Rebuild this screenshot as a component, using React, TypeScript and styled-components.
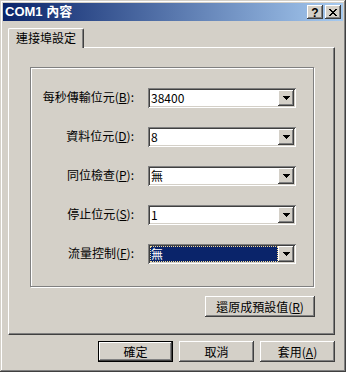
import React from "react";
import styled, { createGlobalStyle } from "styled-components";

const Global = createGlobalStyle`
  html, body { margin: 0; padding: 0; background: #d4d0c8; }
  body {
    font-family: "Noto Sans CJK TC", "Liberation Sans", sans-serif;
    font-size: 12px;
    color: #000;
  }
  * { box-sizing: border-box; }
`;

const Window = styled.div`
  width: 346px;
  height: 372px;
  padding: 3px;
  background: #d4d0c8;
  box-shadow: inset -1px -1px 0 #404040, inset 1px 1px 0 #d4d0c8,
    inset -2px -2px 0 #808080, inset 2px 2px 0 #ffffff;
  display: flex;
  flex-direction: column;
`;

const TitleBar = styled.div`
  height: 18px;
  display: flex;
  align-items: center;
  padding: 0 2px;
  background: linear-gradient(to right, #0a246a, #a6caf0);
`;

const Title = styled.span`
  flex: 1;
  color: #fff;
  font-family: "Liberation Sans", "Noto Sans CJK TC", sans-serif;
  font-weight: bold;
  font-size: 13px;
  line-height: 18px;
  white-space: nowrap;
`;

const CaptionButtons = styled.div`
  display: flex;
  gap: 2px;
`;

const CaptionButton = styled.div`
  width: 16px;
  height: 14px;
  background: #d4d0c8;
  box-shadow: inset -1px -1px 0 #404040, inset 1px 1px 0 #ffffff,
    inset -2px -2px 0 #808080;
  display: flex;
  align-items: center;
  justify-content: center;
`;

const HelpGlyph = styled.span`
  font-family: "Liberation Sans", sans-serif;
  font-weight: bold;
  font-size: 12px;
  line-height: 12px;
  margin-top: 1px;
`;

const Body = styled.div`
  display: flex;
  flex-direction: column;
  padding: 7px 0 0 5px;
`;

const TabStrip = styled.div`
  display: flex;
  height: 19px;
`;

const Tab = styled.div`
  position: relative;
  z-index: 1;
  width: 76px;
  height: 20px;
  margin-bottom: -1px;
  padding-left: 7px;
  background: #d4d0c8;
  border-left: 1px solid #ffffff;
  border-top: 1px solid #ffffff;
  border-right: 1px solid #404040;
  border-top-left-radius: 2px;
  border-top-right-radius: 2px;
  box-shadow: inset -1px 0 0 #808080;
  line-height: 18px;
  white-space: nowrap;
`;

const Panel = styled.div`
  width: 327px;
  height: 288px;
  background: #d4d0c8;
  border: 1px solid;
  border-color: #ffffff #404040 #404040 #ffffff;
  box-shadow: inset -1px -1px 0 #808080;
  display: flex;
  flex-direction: column;
  align-items: flex-start;
`;

const PanelContent = styled.div`
  margin: 19px 0 0 21px;
  width: 285px;
  display: flex;
  flex-direction: column;
  align-items: flex-end;
`;

const GroupBox = styled.div`
  width: 284px;
  height: 220px;
  margin-right: 1px;
  border: 1px solid #808080;
  box-shadow: inset 1px 1px 0 #ffffff, 1px 1px 0 #ffffff;
  display: grid;
  grid-template-columns: 103px 148px;
  grid-auto-rows: 20px;
  column-gap: 14px;
  row-gap: 19px;
  padding-top: 20px;
  align-content: start;
  align-items: center;
`;

const Label = styled.label`
  text-align: right;
  white-space: nowrap;
  line-height: 17px;
  padding-bottom: 3px;
`;

const Combo = styled.div`
  width: 148px;
  height: 20px;
  padding: 2px;
  display: flex;
  background: #ffffff;
  box-shadow: inset 1px 1px 0 #808080, inset -1px -1px 0 #ffffff,
    inset 2px 2px 0 #404040, inset -2px -2px 0 #d4d0c8;
`;

const Field = styled.div<{ $selected?: boolean }>`
  flex: 1;
  height: 16px;
  line-height: 16px;
  padding-left: 1px;
  white-space: nowrap;
  background: ${(p) => (p.$selected ? "#0a246a" : "#ffffff")};
  color: ${(p) => (p.$selected ? "#ffffff" : "#000000")};
  outline: ${(p) => (p.$selected ? "1px dotted #f5db95" : "none")};
  outline-offset: -1px;
`;

const DropButton = styled.div`
  width: 16px;
  height: 16px;
  background: #d4d0c8;
  box-shadow: inset -1px -1px 0 #404040, inset 1px 1px 0 #ffffff,
    inset -2px -2px 0 #808080;
  display: flex;
  align-items: center;
  justify-content: center;
`;

const Button = styled.button<{ $default?: boolean; $width?: number }>`
  width: ${(p) => p.$width ?? 75}px;
  height: 21px;
  padding: 0;
  margin: 0;
  border: none;
  background: #d4d0c8;
  color: #000;
  font-family: "Noto Sans CJK TC", "Liberation Sans", sans-serif;
  font-size: 12px;
  line-height: 17px;
  white-space: nowrap;
  box-shadow: ${(p) =>
    p.$default
      ? "inset 0 0 0 1px #000000, inset -2px -2px 0 #404040, inset 2px 2px 0 #ffffff, inset -3px -3px 0 #808080"
      : "inset -1px -1px 0 #404040, inset 1px 1px 0 #ffffff, inset -2px -2px 0 #808080"};
`;

const ResetButton = styled(Button)`
  margin-top: 9px;
`;

const ButtonRow = styled.div`
  width: 327px;
  margin-top: 6px;
  display: flex;
  justify-content: flex-end;
  gap: 6px;
`;

const Arrow = () => (
  <svg width="7" height="4" viewBox="0 0 7 4" shapeRendering="crispEdges">
    <path d="M0 0h7v1h-1v1h-1v1h-1v1h-1v-1h-1v-1h-1v-1h-1z" fill="#000" />
  </svg>
);

const closeRows = ["11000011", "01100110", "00111100", "00011000", "00111100", "01100110", "11000011"];

const CloseGlyph = () => (
  <svg width="8" height="7" viewBox="0 0 8 7" shapeRendering="crispEdges">
    {closeRows.flatMap((row, y) =>
      row.split("").map((c, x) =>
        c === "1" ? <rect key={`${x}-${y}`} x={x} y={y} width="1" height="1" fill="#000" /> : null
      )
    )}
  </svg>
);

const rows = [
  { label: "每秒傳輸位元", key: "B", value: "38400" },
  { label: "資料位元", key: "D", value: "8" },
  { label: "同位檢查", key: "P", value: "無" },
  { label: "停止位元", key: "S", value: "1" },
  { label: "流量控制", key: "F", value: "無", selected: true },
];

export default function App() {
  return (
    <>
      <Global />
      <Window>
        <TitleBar>
          <Title>COM1 內容</Title>
          <CaptionButtons>
            <CaptionButton>
              <HelpGlyph>?</HelpGlyph>
            </CaptionButton>
            <CaptionButton>
              <CloseGlyph />
            </CaptionButton>
          </CaptionButtons>
        </TitleBar>
        <Body>
          <TabStrip>
            <Tab>連接埠設定</Tab>
          </TabStrip>
          <Panel>
            <PanelContent>
              <GroupBox>
                {rows.map((r) => (
                  <React.Fragment key={r.key}>
                    <Label>
                      {r.label}(<u>{r.key}</u>):
                    </Label>
                    <Combo>
                      <Field $selected={r.selected}>{r.value}</Field>
                      <DropButton>
                        <Arrow />
                      </DropButton>
                    </Combo>
                  </React.Fragment>
                ))}
              </GroupBox>
              <ResetButton $width={110}>
                還原成預設值(<u>R</u>)
              </ResetButton>
            </PanelContent>
          </Panel>
          <ButtonRow>
            <Button $default>確定</Button>
            <Button>取消</Button>
            <Button>
              套用(<u>A</u>)
            </Button>
          </ButtonRow>
        </Body>
      </Window>
    </>
  );
}
